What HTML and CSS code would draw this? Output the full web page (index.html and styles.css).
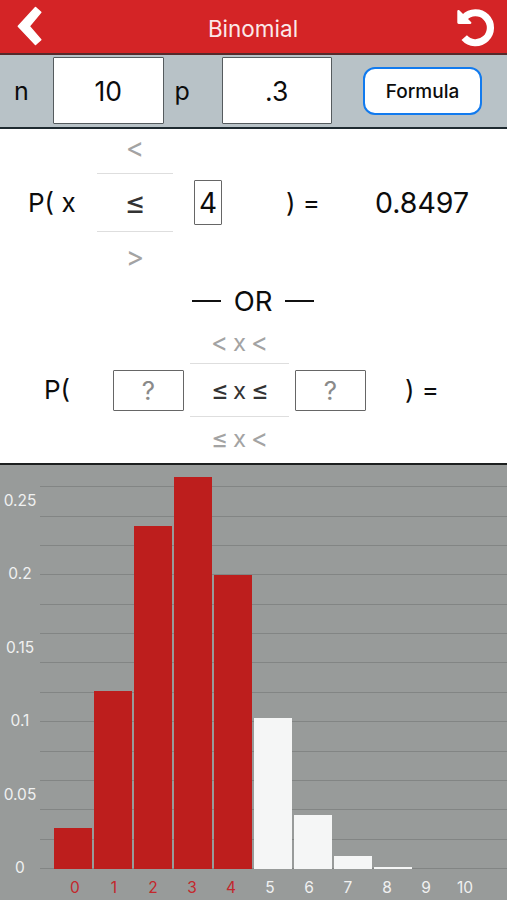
FILE: index.html
```html
<!DOCTYPE html>
<html lang="en">
<head>
<meta charset="utf-8">
<title>Binomial</title>
<link rel="stylesheet" href="styles.css">
</head>
<body>
<header class="nav">
  <svg class="back" width="26" height="40" viewBox="0 0 26 40"><path d="M18.500 1.500 23.800 6.300 12.200 20.200 23.800 33.800 18.500 38.400 1.300 20.200Z"/></svg>
  <h1 class="title">Binomial</h1>
  <svg class="reset" width="40" height="40" viewBox="0 0 40 40"><path class="arc" d="M7.500 10.500A15 15 0 1 1 7.200 30.700"/><path class="head" d="M.3 4.200a1.200 1.200 0 0 1 2-.9L14 14.900a1.200 1.200 0 0 1-.8 2.100H1.700A1.400 1.400 0 0 1 .3 15.600Z"/></svg>
</header>
<section class="params">
  <span class="label label-n">n</span>
  <div class="field">10</div>
  <span class="label label-p">p</span>
  <div class="field">.3</div>
  <button class="formula">Formula</button>
</section>
<main class="panel">
  <div class="row single">
    <span class="open">P( x</span>
    <div class="picker"><div>&lt;</div><div class="chosen">≤</div><div>&gt;</div></div>
    <div class="box value">4</div>
    <span class="close">) =</span>
    <span class="result">0.8497</span>
  </div>
  <div class="or"><i></i><span>OR</span><i></i></div>
  <div class="row between">
    <span class="open">P(</span>
    <div class="box">?</div>
    <div class="picker"><div><b>&lt;</b>x<b>&lt;</b></div><div class="chosen"><b>≤</b>x<b>≤</b></div><div><b>≤</b>x<b>&lt;</b></div></div>
    <div class="box">?</div>
    <span class="close">) =</span>
  </div>
</main>
<section class="chart">
  <div class="yaxis"><span>0.25</span><span>0.2</span><span>0.15</span><span>0.1</span><span>0.05</span><span>0</span></div>
  <div class="plot">
    <div class="bar hit" style="height:41.2px"></div>
    <div class="bar hit" style="height:177.7px"></div>
    <div class="bar hit" style="height:342.6px"></div>
    <div class="bar hit" style="height:391.7px"></div>
    <div class="bar hit" style="height:293.8px"></div>
    <div class="bar" style="height:151.1px"></div>
    <div class="bar" style="height:54px"></div>
    <div class="bar" style="height:13.2px"></div>
    <div class="bar" style="height:2.1px"></div>
    <div class="bar" style="height:0px"></div>
    <div class="bar" style="height:0px"></div>
  </div>
  <div class="xaxis"><span class="on">0</span><span class="on">1</span><span class="on">2</span><span class="on">3</span><span class="on">4</span><span>5</span><span>6</span><span>7</span><span>8</span><span>9</span><span>10</span></div>
</section>
</body>
</html>
```
FILE: styles.css
```css
* { box-sizing: border-box; }
body {
  margin: 0;
  width: 507px;
  height: 900px;
  overflow: hidden;
  display: flex;
  flex-direction: column;
  background: #fff;
  color: #0c0c0c;
  font-family: Inter, "Liberation Sans", sans-serif;
}
.nav {
  height: 55px;
  flex: none;
  display: flex;
  justify-content: space-between;
  padding: 6px 10px 0 17px;
  background: #d42426;
  border-bottom: 2px solid #542a2b;
}
.back { fill: #fff; stroke: #fff; stroke-width: 1.5; stroke-linejoin: round; }
.reset { margin-top: 1px; }
.arc { fill: none; stroke: #fff; stroke-width: 7.2; }
.head { fill: #fff; }
.title {
  margin: 8px 0 0 6px;
  font-size: 22.5px;
  line-height: 30px;
  font-weight: 400;
  color: #fbe9e9;
}
.params {
  height: 74px;
  flex: none;
  display: flex;
  padding-top: 2px;
  background: #b8c2c7;
  border-bottom: 2px solid #1e2a30;
}
.label { font-size: 25px; line-height: 69px; }
.label-n { width: 53px; padding-left: 14px; }
.label-p { width: 58px; padding-left: 11px; }
.field {
  width: 110.5px;
  height: 67px;
  border: 1px solid #555b5e;
  border-radius: 1px;
  background: #fff;
  font-size: 26.5px;
  line-height: 66px;
  text-align: center;
}
.formula {
  width: 119px;
  height: 48px;
  margin: 10px 0 0 31px;
  padding: 0;
  border: 2px solid #117aee;
  border-radius: 12px;
  background: #fff;
  color: #0c0c0c;
  font: 500 19px Inter, sans-serif;
}
.panel {
  height: 335.5px;
  flex: none;
  border-bottom: 2px solid #1c1f1f;
}
.row { display: flex; align-items: center; font-size: 26px; line-height: 36px; white-space: pre; }
.single { height: 147px; }
.between { height: 138px; margin-top: -5px; }
.picker { display: flex; flex-direction: column; text-align: center; color: #a3a3a3; }
.picker .chosen { color: #333; border: 1px solid #dedede; border-width: 1px 0; }
.single .open { width: 97px; padding-left: 28px; }
.single .picker { width: 76px; font-size: 28px; }
.single .picker div { height: 50px; line-height: 51px; }
.single .picker .chosen { height: 59px; line-height: 57px; font-size: 32px; }
.box { border: 1px solid #666; text-align: center; border-radius: 1px; }
.value { width: 28px; height: 45px; line-height: 44px; margin-left: 21px; font-size: 28px; }
.single .close { width: 153px; padding-left: 64px; }
.result { font-size: 28.5px; }
.or { height: 50px; display: flex; align-items: center; justify-content: center; gap: 13px; margin-left: -1px; font-size: 27.5px; }
.or i { width: 29px; height: 2px; background: #111; }
.between .open { width: 113px; padding-left: 44px; }
.between .box { width: 71px; height: 41px; line-height: 39px; color: #8a8a8a; font-size: 26px; }
.between .picker { width: 99px; margin: 0 6px; font-size: 24px; }
.between .picker div { display: flex; justify-content: center; gap: 5px; height: 42px; line-height: 44px; }
.between .picker b { width: 17px; font-size: 26px; font-weight: 400; }
.between .picker .chosen { height: 54px; line-height: 54px; }
.between .picker .chosen b { font-size: 27px; }
.between .close { padding-left: 39px; }
.chart {
  flex: 1;
  display: grid;
  grid-template-columns: 40px 1fr;
  grid-template-rows: 404.5px 1fr;
  background: #989b9a;
}
.yaxis {
  grid-row: 1 / 3;
  display: flex;
  flex-direction: column;
  align-items: center;
  color: #f0f1f1;
  font-size: 15.5px;
  line-height: 72.5px;
}
.yaxis span { flex: none; height: 73.5px; }
.plot {
  display: flex;
  align-items: flex-end;
  gap: 2px;
  padding-left: 14.3px;
  background: repeating-linear-gradient(to top, #828584 0 1px, transparent 1px 29.37px) 0 0 / 100% 383px no-repeat;
  background-position: bottom;
}
.bar { width: 38px; background: #f5f6f6; }
.hit { background: #bd1e1d; }
.xaxis {
  grid-column: 2;
  display: flex;
  padding: 9px 0 0 15.5px;
  color: #f0f1f1;
  font-size: 15.5px;
  line-height: 20px;
}
.xaxis span { width: 39px; text-align: center; }
.xaxis .on { color: #c3272c; }
```
